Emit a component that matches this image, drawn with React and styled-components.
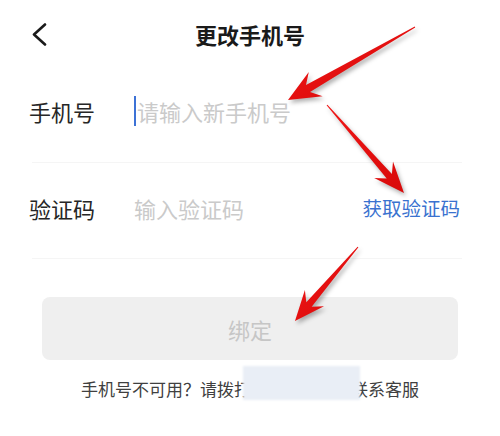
import React from "react";
import styled, { createGlobalStyle } from "styled-components";

const Global = createGlobalStyle`
  html, body { margin: 0; padding: 0; background: #fff; }
  body { font-family: "Noto Sans CJK SC", "Noto Sans", sans-serif; }
`;

const Page = styled.div`
  position: relative;
  width: 500px;
  height: 436px;
  overflow: hidden;
  background: #fff;
`;

const Header = styled.div`
  position: relative;
  height: 64px;
  display: flex;
  align-items: center;
  justify-content: center;
  padding-top: 4px;
  box-sizing: border-box;
`;

const Back = styled.svg`
  position: absolute;
  left: 31px;
  top: 22px;
`;

const Title = styled.div`
  font-size: 22px;
  font-weight: 700;
  color: #1a1a1a;
`;

const Form = styled.div`
  padding: 0 38px 0 32px;
`;

const Row = styled.div`
  display: flex;
  align-items: center;
  height: ${(p) => p.$h}px;
  padding-bottom: ${(p) => p.$pb}px;
  box-sizing: border-box;
  border-bottom: 1px solid #f5f5f5;
`;

const Label = styled.div`
  width: 105px;
  margin-left: -3px;
  font-size: 22px;
  color: #262626;
`;

const Placeholder = styled.div`
  flex: 1;
  display: flex;
  align-items: center;
  font-size: 22px;
  color: #cacaca;
`;

const Caret = styled.span`
  display: inline-block;
  width: 2px;
  height: 30px;
  background: #3d72d6;
  margin-right: 1px;
`;

const Link = styled.div`
  font-size: 19.5px;
  color: #3a72cf;
  margin-right: 2px;
`;

const Button = styled.div`
  margin: 38px 42px 0 42px;
  height: 63px;
  border-radius: 8px;
  background: #efefef;
  display: flex;
  align-items: center;
  justify-content: center;
  font-size: 22px;
  color: #c6c6c6;
`;

const Footer = styled.div`
  position: relative;
  margin-top: 16px;
  display: flex;
  justify-content: center;
  font-size: 17px;
  color: #404040;
  white-space: pre;
`;

const Phone = styled.span`
  display: inline-block;
  width: 100px;
`;

const Mask = styled.div`
  position: absolute;
  left: 243px;
  top: -10px;
  width: 117px;
  height: 34px;
  background: #e9eef6;
  filter: blur(1.2px);
`;

const Overlay = styled.svg`
  position: absolute;
  left: 0;
  top: 0;
  pointer-events: none;
  filter: drop-shadow(2px 3px 2px rgba(0, 0, 0, 0.3));
`;

function arrowPoints(x1, y1, x2, y2, headLen, headW, w0, w1) {
  const dx = x2 - x1;
  const dy = y2 - y1;
  const L = Math.hypot(dx, dy);
  const ux = dx / L;
  const uy = dy / L;
  const nx = -uy;
  const ny = ux;
  const p = (x, y) => `${x.toFixed(1)},${y.toFixed(1)}`;
  const bx = x2 - ux * headLen;
  const by = y2 - uy * headLen;
  const sx = x2 - ux * headLen * 0.72;
  const sy = y2 - uy * headLen * 0.72;
  return [
    p(x1 + nx * w0 / 2, y1 + ny * w0 / 2),
    p(sx + nx * w1 / 2, sy + ny * w1 / 2),
    p(bx + nx * headW / 2, by + ny * headW / 2),
    p(x2, y2),
    p(bx - nx * headW / 2, by - ny * headW / 2),
    p(sx - nx * w1 / 2, sy - ny * w1 / 2),
    p(x1 - nx * w0 / 2, y1 - ny * w0 / 2),
  ].join(" ");
}

const arrows = [
  [415, 27, 288, 100, 32, 28, 1, 8],
  [327, 105, 404, 193, 31, 25, 1, 7],
  [358, 247, 295, 321, 30, 25, 1, 7],
];

export default function App() {
  return (
    <Page>
      <Global />
      <Header>
        <Back width="18" height="24" viewBox="0 0 18 24">
          <polyline points="14,2.5 3,12.5 14,22.5" fill="none" stroke="#1a1a1a" strokeWidth="2.6" strokeLinecap="round" strokeLinejoin="round" />
        </Back>
        <Title>更改手机号</Title>
      </Header>
      <Form>
        <Row $h={99} $pb={4}>
          <Label>手机号</Label>
          <Placeholder>
            <Caret />
            请输入新手机号
          </Placeholder>
        </Row>
        <Row $h={96} $pb={6}>
          <Label>验证码</Label>
          <Placeholder>输入验证码</Placeholder>
          <Link>获取验证码</Link>
        </Row>
      </Form>
      <Button>绑定</Button>
      <Footer>
        手机号不可用？请拨打<Phone />联系客服
        <Mask />
      </Footer>
      <Overlay width="500" height="436" viewBox="0 0 500 436">
        <defs>
          <linearGradient id="rg" x1="0" y1="0" x2="1" y2="1">
            <stop offset="0" stopColor="#f01616" />
            <stop offset="1" stopColor="#d80a0a" />
          </linearGradient>
        </defs>
        {arrows.map((a, i) => (
          <polygon key={i} points={arrowPoints(...a)} fill="url(#rg)" />
        ))}
      </Overlay>
    </Page>
  );
}
